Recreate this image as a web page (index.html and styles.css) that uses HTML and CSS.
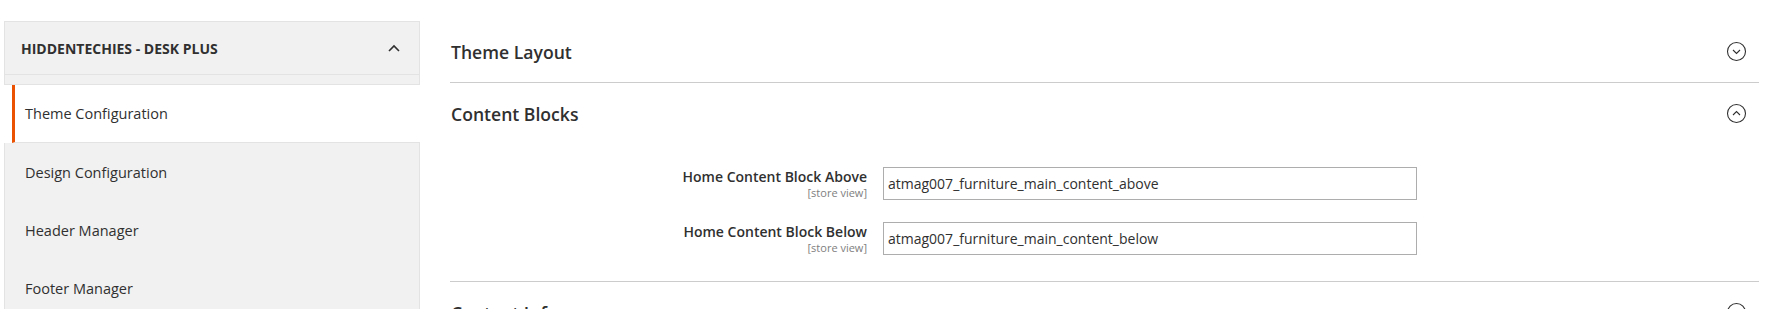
FILE: index.html
```html
<!DOCTYPE html>
<html>
<head>
<meta charset="utf-8">
<link rel="stylesheet" href="styles.css">
</head>
<body>
<div class="page">
  <aside class="nav">
    <div class="nav-title">
      <span>HIDDENTECHIES - DESK PLUS</span>
      <svg class="caret" width="12" height="8" viewBox="0 0 12 8"><polyline points="1,7 6,2 11,7" fill="none" stroke="#303030" stroke-width="1.6"/></svg>
    </div>
    <div class="nav-strip"></div>
    <ul class="nav-items">
      <li class="nav-item active">Theme Configuration</li>
      <li class="nav-item">Design Configuration</li>
      <li class="nav-item">Header Manager</li>
      <li class="nav-item">Footer Manager</li>
    </ul>
  </aside>
  <main class="main">
    <section class="section">
      <div class="section-head">
        <h2 class="section-title">Theme Layout</h2>
        <svg class="toggle" width="21" height="21" viewBox="0 0 21 21"><circle cx="10.5" cy="10.5" r="9" fill="none" stroke="#303030" stroke-width="1.1"/><polyline points="7,9 10.5,12.5 14,9" fill="none" stroke="#303030" stroke-width="1.1"/></svg>
      </div>
    </section>
    <section class="section">
      <div class="section-head">
        <h2 class="section-title">Content Blocks</h2>
        <svg class="toggle" width="21" height="21" viewBox="0 0 21 21"><circle cx="10.5" cy="10.5" r="9" fill="none" stroke="#303030" stroke-width="1.1"/><polyline points="7,12 10.5,8.5 14,12" fill="none" stroke="#303030" stroke-width="1.1"/></svg>
      </div>
      <div class="section-body">
        <div class="field">
          <div class="label"><span class="label-text">Home Content Block Above</span><span class="scope">[store view]</span></div>
          <input class="input" type="text" value="atmag007_furniture_main_content_above">
        </div>
        <div class="field">
          <div class="label"><span class="label-text">Home Content Block Below</span><span class="scope">[store view]</span></div>
          <input class="input" type="text" value="atmag007_furniture_main_content_below">
        </div>
      </div>
    </section>
    <section class="section">
      <div class="section-head">
        <h2 class="section-title">Content Info</h2>
        <svg class="toggle" width="21" height="21" viewBox="0 0 21 21"><circle cx="10.5" cy="10.5" r="9" fill="none" stroke="#303030" stroke-width="1.1"/><polyline points="7,9 10.5,12.5 14,9" fill="none" stroke="#303030" stroke-width="1.1"/></svg>
      </div>
    </section>
  </main>
</div>
</body>
</html>
```

FILE: styles.css
```css
html, body {
  margin: 0;
  padding: 0;
  background: #ffffff;
}
body {
  font-family: "Open Sans", "Liberation Sans", sans-serif;
  color: #303030;
  overflow: hidden;
}
.page {
  display: flex;
  align-items: flex-start;
}
.nav {
  flex: none;
  width: 416px;
  margin: 21px 0 0 4px;
}
.nav-title {
  box-sizing: border-box;
  height: 54px;
  background: #f1f1f1;
  border: 1px solid #e3e3e3;
  display: flex;
  align-items: center;
  justify-content: space-between;
  padding: 0 19px 0 16px;
  font-size: 14px;
  font-weight: 700;
  color: #303030;
}
.caret {
  display: block;
}
.nav-strip {
  box-sizing: border-box;
  height: 10px;
  background: #f1f1f1;
  border: 1px solid #e3e3e3;
  border-top: none;
}
.nav-items {
  list-style: none;
  margin: 0;
  padding: 0;
}
.nav-item {
  box-sizing: border-box;
  height: 58px;
  display: flex;
  align-items: center;
  background: #f1f1f1;
  border-left: 1px solid #e3e3e3;
  border-right: 1px solid #e3e3e3;
  padding-left: 20px;
  font-size: 14.5px;
  color: #303030;
}
.nav-item.active {
  background: #ffffff;
  margin-left: 8px;
  border-left: 3px solid #eb5202;
  border-right: none;
  border-bottom: 1px solid #e3e3e3;
  padding-left: 10px;
  color: #303030;
}
.main {
  flex: 1;
  margin: 21px 26px 0 30px;
}
.section {
  border-bottom: 1px solid #cccccc;
}
.section-head {
  height: 61px;
  display: flex;
  align-items: center;
  justify-content: space-between;
  padding: 0 12px 0 1px;
}
.section-title {
  margin: 0;
  font-size: 17.6px;
  font-weight: 600;
  color: #303030;
}
.toggle {
  display: block;
}
.section-body {
  padding: 23px 0 26px;
  display: flex;
  flex-direction: column;
  gap: 22px;
}
.field {
  display: grid;
  grid-template-columns: 417px 534px;
  column-gap: 16px;
  align-items: start;
}
.label {
  display: flex;
  flex-direction: column;
  align-items: flex-end;
  text-align: right;
}
.label-text {
  font-size: 14px;
  font-weight: 600;
  line-height: 19px;
  color: #303030;
}
.scope {
  font-size: 11px;
  line-height: 14px;
  color: #808080;
}
.input {
  box-sizing: border-box;
  width: 534px;
  height: 33px;
  margin: 0;
  border: 1px solid #adadad;
  border-radius: 0;
  padding: 0 4px;
  font-family: "Open Sans", "Liberation Sans", sans-serif;
  font-size: 14px;
  color: #303030;
  background: #ffffff;
  outline: none;
}
```
